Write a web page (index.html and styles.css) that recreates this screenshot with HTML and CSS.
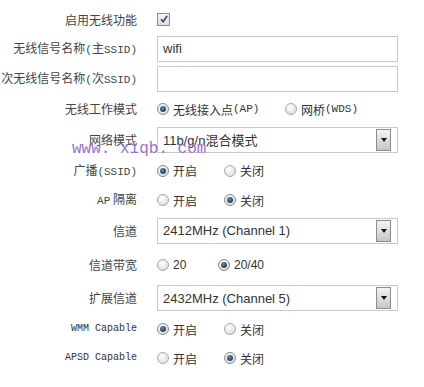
FILE: index.html
```html
<!DOCTYPE html>
<html lang="zh-CN">
<head>
<meta charset="utf-8">
<title>无线设置</title>
<link rel="stylesheet" href="styles.css">
</head>
<body>
<div class="page">
  <div class="form">
    <div class="label">启用无线功能</div>
    <div class="ctrl"><span class="checkbox"><svg viewBox="0 0 10 10" width="10" height="10"><path d="M2 5.2 L4.2 7.6 L8.2 1.8" fill="none" stroke="#3a4d6b" stroke-width="1.6"/></svg></span></div>

    <div class="label">无线信号名称<span class="en">(</span>主<span class="en">SSID)</span></div>
    <div class="ctrl"><div class="field">wifi</div></div>

    <div class="label">次无线信号名称<span class="en">(</span>次<span class="en">SSID)</span></div>
    <div class="ctrl"><div class="field"></div></div>

    <div class="label">无线工作模式</div>
    <div class="ctrl radios">
      <span class="opt opt-ap"><span class="radio on"></span>无线接入点<span class="en">(AP)</span></span>
      <span class="opt"><span class="radio"></span>网桥<span class="en">(WDS)</span></span>
    </div>

    <div class="label">网络模式</div>
    <div class="ctrl"><div class="field select"><span>11b/g/n混合模式</span><span class="arrow"></span></div></div>

    <div class="label">广播<span class="en">(SSID)</span></div>
    <div class="ctrl radios">
      <span class="opt opt-on"><span class="radio on"></span>开启</span>
      <span class="opt"><span class="radio"></span>关闭</span>
    </div>

    <div class="label"><span class="en">AP</span> 隔离</div>
    <div class="ctrl radios">
      <span class="opt opt-on"><span class="radio"></span>开启</span>
      <span class="opt"><span class="radio on"></span>关闭</span>
    </div>

    <div class="label">信道</div>
    <div class="ctrl"><div class="field select"><span>2412MHz (Channel 1)</span><span class="arrow"></span></div></div>

    <div class="label">信道带宽</div>
    <div class="ctrl radios">
      <span class="opt opt-20 num"><span class="radio"></span>20</span>
      <span class="opt num"><span class="radio on"></span>20/40</span>
    </div>

    <div class="label">扩展信道</div>
    <div class="ctrl"><div class="field select"><span>2432MHz (Channel 5)</span><span class="arrow"></span></div></div>

    <div class="label mono">WMM Capable</div>
    <div class="ctrl radios">
      <span class="opt opt-on"><span class="radio on"></span>开启</span>
      <span class="opt"><span class="radio"></span>关闭</span>
    </div>

    <div class="label mono">APSD Capable</div>
    <div class="ctrl radios">
      <span class="opt opt-on"><span class="radio"></span>开启</span>
      <span class="opt"><span class="radio on"></span>关闭</span>
    </div>
  </div>
  <div class="watermark">www. xiqb. com</div>
</div>
</body>
</html>
```
FILE: styles.css
```css
html, body {
  margin: 0;
  padding: 0;
  background: #ffffff;
}
body {
  font-family: "Noto Sans CJK SC", "Liberation Sans", sans-serif;
  color: #3a3a3a;
  font-size: 12px;
}
.page {
  position: relative;
  width: 424px;
  height: 387px;
  overflow: hidden;
}
.form {
  display: grid;
  grid-template-columns: 137px 241px;
  column-gap: 20px;
  grid-template-rows: 29px 29px 31px 30px 31px 31px 28px 33px 35px 32px 30px 28px;
  padding-top: 5px;
}
.label {
  justify-self: end;
  align-self: center;
  white-space: nowrap;
  font-size: 12px;
  line-height: 14px;
  color: #444;
}
.en {
  font-family: "Liberation Mono", monospace;
  font-size: 11px;
}
.label.mono {
  font-family: "Liberation Mono", monospace;
  font-size: 10px;
  color: #333;
}
.ctrl {
  align-self: center;
  display: flex;
  align-items: center;
}
.checkbox {
  width: 11px;
  height: 11px;
  border: 1px solid #8c8c8c;
  background: linear-gradient(#f4f4f4, #dedede);
  display: flex;
  align-items: center;
  justify-content: center;
  margin-top: -1px;
}
.field {
  box-sizing: border-box;
  width: 241px;
  height: 26px;
  border: 1px solid #c9c9c9;
  background: #fff;
  padding-left: 5px;
  display: flex;
  align-items: center;
  font-family: "Liberation Sans", "Noto Sans CJK SC", sans-serif;
  font-size: 13px;
  color: #333;
}
.select {
  justify-content: space-between;
  padding-right: 6px;
}
.arrow {
  box-sizing: border-box;
  width: 15px;
  height: 22px;
  border: 1px solid #8d8d8d;
  background: linear-gradient(#f4f4f4, #c6c6c6);
  display: flex;
  align-items: center;
  justify-content: center;
}
.arrow::after {
  content: "";
  border-left: 3.5px solid transparent;
  border-right: 3.5px solid transparent;
  border-top: 4px solid #111;
}
.radios {
  font-size: 12px;
  color: #333;
}
.opt {
  display: inline-flex;
  align-items: center;
  white-space: nowrap;
}
.opt-ap { width: 128px; }
.opt-on { width: 67px; }
.opt-20 { width: 61px; }
.num {
  font-family: "Liberation Sans", sans-serif;
  font-size: 12px;
}
.radio {
  box-sizing: border-box;
  width: 12px;
  height: 12px;
  border-radius: 50%;
  border: 1px solid #a8a8a8;
  background: radial-gradient(circle at 40% 35%, #ffffff 0%, #e6e6e6 60%, #cfcfcf 100%);
  margin-right: 4px;
  display: inline-flex;
  align-items: center;
  justify-content: center;
}
.radio.on {
  border-color: #7f8c99;
}
.radio.on::after {
  content: "";
  width: 6px;
  height: 6px;
  border-radius: 50%;
  background: radial-gradient(circle at 40% 35%, #6d8aa3 0%, #2c4a63 60%, #1c3348 100%);
}
.watermark {
  position: absolute;
  left: 72px;
  top: 140px;
  font-family: "Liberation Mono", monospace;
  font-size: 16px;
  line-height: 18px;
  color: #9b72cc;
  white-space: nowrap;
}
```
